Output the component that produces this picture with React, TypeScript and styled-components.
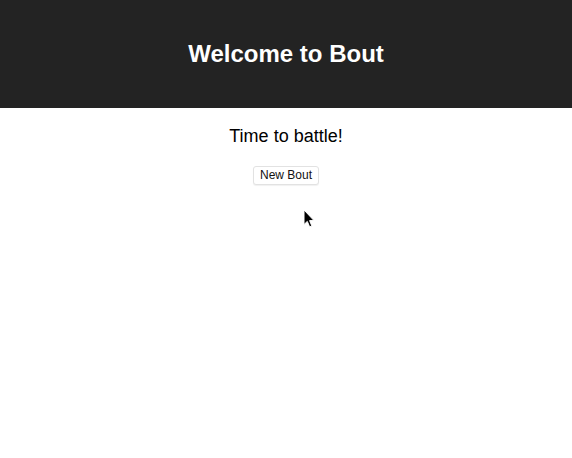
import React from "react";
import styled, { createGlobalStyle } from "styled-components";

const GlobalStyle = createGlobalStyle`
  html, body {
    margin: 0;
    padding: 0;
    background: #ffffff;
    font-family: "Liberation Sans", Arial, Helvetica, sans-serif;
  }
`;

const Page = styled.div`
  position: relative;
  min-height: 458px;
  text-align: center;
`;

const Header = styled.header`
  box-sizing: border-box;
  height: 108px;
  padding: 20px;
  background-color: #232323;
  color: #ffffff;
`;

const Title = styled.h1`
  margin: 21px 0;
  font-size: 24px;
  line-height: 26px;
  font-weight: bold;
`;

const Intro = styled.p`
  margin: 18px 0;
  font-size: 18px;
  line-height: 21px;
  color: #000000;
`;

const Button = styled.button`
  height: 19px;
  padding: 0 6px;
  font-family: "Liberation Sans", Arial, sans-serif;
  font-size: 12px;
  line-height: 17px;
  color: #111111;
  background: #ffffff;
  border: 1px solid #e2e2e2;
  border-radius: 3px;
  box-shadow: 0 1px 1px rgba(0, 0, 0, 0.06);
`;

const Cursor = styled.svg`
  position: absolute;
  left: 303px;
  top: 209px;
`;

export default function App() {
  return (
    <Page>
      <GlobalStyle />
      <Header>
        <Title>Welcome to Bout</Title>
      </Header>
      <Intro>Time to battle!</Intro>
      <Button>New Bout</Button>
      <Cursor width="13" height="20" viewBox="0 0 13 20">
        <path
          d="M1 1 L1 15.5 L4.3 12.4 L6.6 17.8 L8.8 16.9 L6.6 11.6 L11 11.6 Z"
          fill="#000"
          stroke="#fff"
          strokeWidth="1"
          strokeLinejoin="round"
        />
      </Cursor>
    </Page>
  );
}
